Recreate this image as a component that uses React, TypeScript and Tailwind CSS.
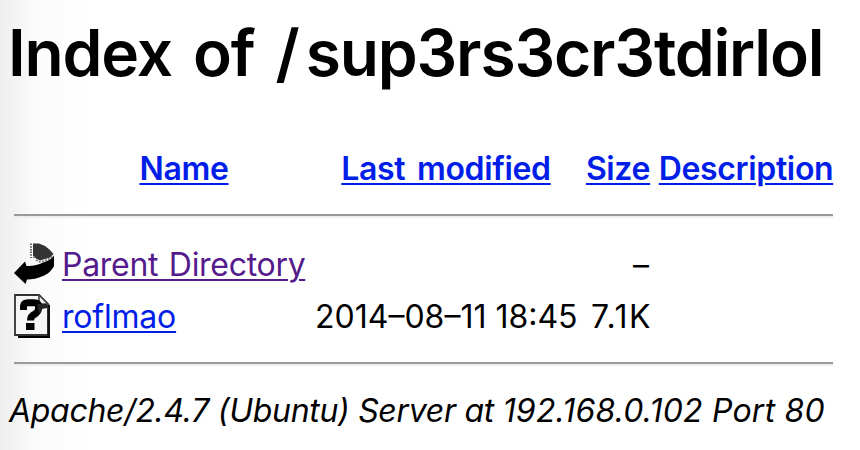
import type { ReactNode } from "react";

function BackIcon() {
  return (
    <svg width="40" height="44" viewBox="0 0 40 44" className="block">
      <path d="M19 1.5 H25 L31 4 L36 8 L39.5 12 L36 15.5 L31 17 L26 18.5 L22 16.5 L20 14 H19 Z" fill="#333" />
      <path d="M17 1.5 V16 M20 14.5 V16" stroke="#666" strokeWidth="2" strokeDasharray="1.5 1.2" />
      <path d="M22 18 L26 20 L31 18.6 L36 16.5 L39 13.5" stroke="#777" strokeWidth="1.6" strokeDasharray="2 1.2" fill="none" />
      <path d="M0 31 L11 19.5 L12.5 24 C20 24 25 22.5 29 20.5 C34 19 38 17 40 13.5 V24 C37 29.5 34 32 29 34 C24 36.5 18 37.5 13 37.5 L11.5 42 Z" fill="#000" />
    </svg>
  );
}

function UnknownIcon() {
  return (
    <svg width="36" height="44" viewBox="0 0 36 44" className="block">
      <path d="M34.5 11 V42.5 H4" stroke="#000" strokeWidth="3" fill="none" />
      <path d="M1 1 H25 L34 10 V41 H1 Z" fill="#f6f6f6" stroke="#333" strokeWidth="1.8" />
      <path d="M25 1 V10 H34 Z" fill="#eee" stroke="#444" strokeWidth="1.6" />
      <path d="M34.8 11 V43" stroke="#111" strokeWidth="2.4" />
      <path d="M9.5 16 V12 Q10 8.8 14 8.8 H20 Q24.5 8.8 24.5 12 V15 Q24 18 21 20 Q16.5 22 16.5 26.5" stroke="#000" strokeWidth="7" fill="none" />
      <path d="M23 10 H33 V14 L28 15 L25 20 Z" fill="#222" />
      <rect x="12" y="29" width="8.5" height="7" fill="#000" />
    </svg>
  );
}

function Link({ children, className }: { children: ReactNode; className: string }) {
  return (
    <a
      href="#"
      className={`underline decoration-2 underline-offset-[3px] whitespace-nowrap ${className}`}
    >
      {children}
    </a>
  );
}

function Rule() {
  return (
    <div className="mr-[27px] ml-3.5 h-1 border-t-2 border-b-2 border-t-[#9a9a9a] border-b-[#eee]" />
  );
}

export default function App() {
  return (
    <main className="h-[450px] w-[860px] overflow-hidden bg-white bg-linear-to-r from-[#eeeeee] via-[#fbfbfb] via-[36px] to-white to-[90px] font-['Inter','Liberation_Sans',sans-serif] text-[32px] leading-[52px] text-black">
      <h1 className="mt-[15px] ml-2 h-[76px] text-[64px] leading-[76px] font-semibold tracking-[-1.15px] whitespace-nowrap [word-spacing:6px]">
        Index of <span className="tracking-[6px] [word-spacing:0]">/</span>sup3rs3cr3tdirlol
      </h1>
      <div className="mt-[52px] ml-3.5 grid h-[71px] grid-cols-[39px_244px_262px_64px_174px] gap-x-[9px] font-semibold tracking-[-0.35px] [word-spacing:4px]">
        <span />
        <span className="flex justify-center"><Link className="text-[#001ee8]">Name</Link></span>
        <span className="flex justify-center"><Link className="text-[#001ee8]">Last modified</Link></span>
        <span className="flex justify-center"><Link className="text-[#001ee8]">Size</Link></span>
        <span className="flex justify-center"><Link className="text-[#001ee8]">Description</Link></span>
      </div>
      <Rule />
      <div className="mt-[21px] ml-3.5 grid auto-rows-[52px] grid-cols-[39px_244px_262px_64px_174px] gap-x-[9px]">
        <span className="pt-[3px]"><BackIcon /></span>
        <span><Link className="tracking-[-0.3px] text-[#551a8b] [word-spacing:2px]">Parent Directory</Link></span>
        <span />
        <span className="pr-px text-right">–</span>
        <span />
        <span className="pt-[3px]"><UnknownIcon /></span>
        <span><Link className="tracking-[-0.2px] text-[#001ee8]">roflmao</Link></span>
        <span className="whitespace-nowrap">2014–08–11 18:45</span>
        <span className="-mr-0.5 flex justify-end tracking-[1.5px] whitespace-nowrap">7.1K</span>
        <span />
      </div>
      <div className="mt-[19px]"><Rule /></div>
      <address className="mt-[19px] ml-[9px] whitespace-nowrap italic">
        <span className="tracking-[-0.3px]">Apache/2.4.7 (Ubuntu) Server at </span>
        <span className="tracking-[0.2px]">192.168.0.102 Port 80</span>
      </address>
    </main>
  );
}
